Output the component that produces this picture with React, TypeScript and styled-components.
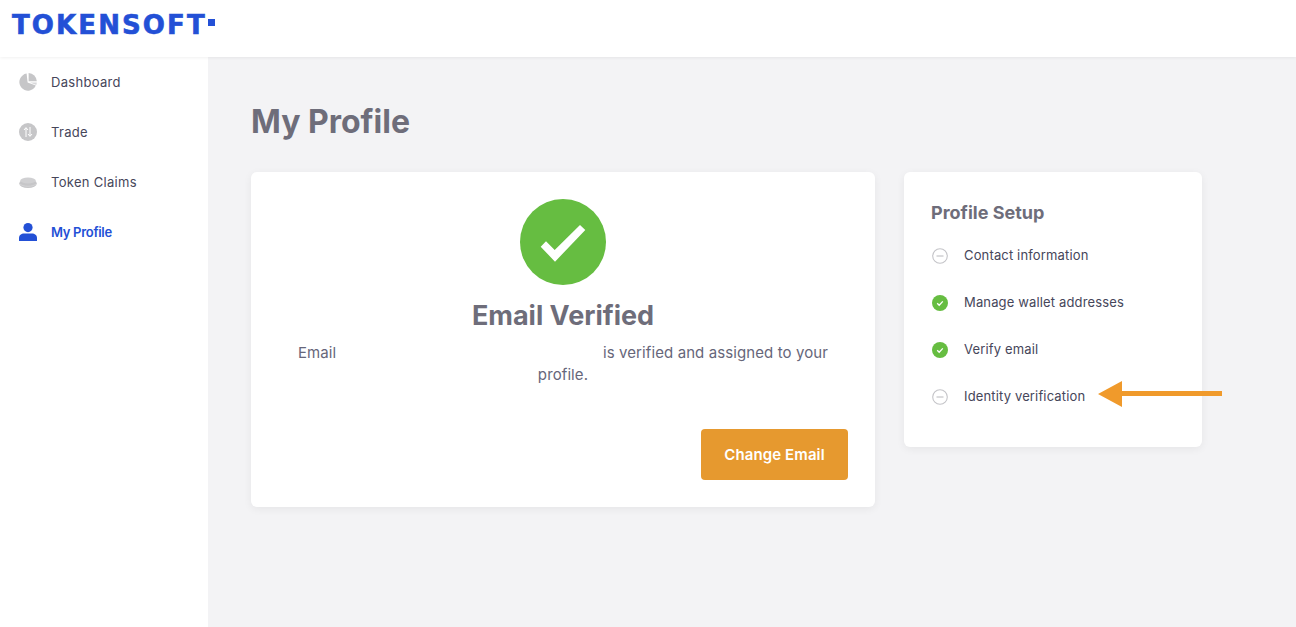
import { createGlobalStyle, styled } from "styled-components";

const GlobalStyle = createGlobalStyle`
  html, body {
    margin: 0;
    height: 100%;
    overflow: hidden;
    background: #f3f3f5;
    font-family: "Inter", "Noto Sans", sans-serif;
  }
`;

const NAV_ITEMS = [
  { label: "Dashboard", icon: <PieIcon /> },
  { label: "Trade", icon: <TradeIcon /> },
  { label: "Token Claims", icon: <CoinIcon /> },
  { label: "My Profile", icon: <UserIcon />, active: true },
];

const STEPS = [
  { label: "Contact information", done: false },
  { label: "Manage wallet addresses", done: true },
  { label: "Verify email", done: true },
  { label: "Identity verification", done: false },
];

function PieIcon() {
  return (
    <svg width="18" height="18" viewBox="0 0 18 18">
      <path d="M7.600.6A8.600 8.600 0 1 0 16.800 12.600L8.600 9.400Z" fill="#c6c6c8" />
      <path d="M9.600 0A8.600 8.600 0 0 1 17.800 8.200H9.600Z" fill="#c6c6c8" />
      <path d="M11 9.600h6.800a8 8 0 0 1-.5 2.300Z" fill="#d8d8da" />
    </svg>
  );
}

function TradeIcon() {
  return (
    <svg width="18" height="18" viewBox="0 0 18 18">
      <circle cx="9" cy="9" r="9" fill="#c6c6c8" />
      <path d="M7 14V5M5 7l2-2.400L9 7M11 4v9M9 11l2 2.400 2-2.400" fill="none" stroke="#fff" strokeWidth="1" />
    </svg>
  );
}

function CoinIcon() {
  return (
    <svg width="18" height="18" viewBox="0 0 18 18">
      <ellipse cx="9" cy="10.500" rx="8.800" ry="4.600" fill="#c6c6c8" />
      <ellipse cx="9" cy="7.500" rx="7.800" ry="3" fill="#d0d0d2" />
      <path d="M.5 10.500c1.500 2 5 2.800 8.500 2.800s7-.8 8.500-2.800" fill="none" stroke="#dcdcde" strokeWidth=".6" />
    </svg>
  );
}

function UserIcon() {
  return (
    <svg width="18" height="18" viewBox="0 0 18 18">
      <circle cx="9" cy="4.600" r="4.600" fill="#2350d6" />
      <path d="M0 18v-3c0-3 2.400-4.600 5-4.600h8c2.600 0 5 1.600 5 4.600v3Z" fill="#2350d6" />
    </svg>
  );
}

function DoneIcon() {
  return (
    <svg width="16" height="16" viewBox="0 0 16 16">
      <circle cx="8" cy="8" r="8" fill="#66bd41" />
      <path d="M5.200 8.200l2 2 3.600-3.800" fill="none" stroke="#fff" strokeWidth="1.300" />
    </svg>
  );
}

function PendingIcon() {
  return (
    <svg width="16" height="16" viewBox="0 0 16 16">
      <circle cx="8" cy="8" r="7.300" fill="none" stroke="#c4c4c8" strokeWidth="1.100" />
      <path d="M4.500 8h7" stroke="#b8b8bc" strokeWidth="1" />
    </svg>
  );
}

export default function App() {
  return (
    <Page>
      <GlobalStyle />
      <Header>
        <Logo>
          TOKENSOFT
          <LogoDot />
        </Logo>
      </Header>
      <Body>
        <Sidebar>
          {NAV_ITEMS.map((item) => (
            <NavItem key={item.label} $active={item.active}>
              <NavIcon>{item.icon}</NavIcon>
              {item.label}
            </NavItem>
          ))}
        </Sidebar>
        <Main>
          <Title>My Profile</Title>
          <Cards>
            <VerifiedCard>
              <svg width="86" height="86" viewBox="0 0 86 86">
                <circle cx="43" cy="43" r="43" fill="#66bd41" />
                <polygon points="26,42.300 20.700,47.700 35,62.700 65.300,31 60,26 34.700,51" fill="#fff" />
              </svg>
              <CardHeading>Email Verified</CardHeading>
              <Message>
                Email <HiddenAddress /> is verified and assigned to your profile.
              </Message>
              <ButtonRow>
                <ChangeButton>Change Email</ChangeButton>
              </ButtonRow>
            </VerifiedCard>
            <SetupCard>
              <SetupHeading>Profile Setup</SetupHeading>
              <StepList>
                {STEPS.map((step) => (
                  <Step key={step.label}>
                    <StepIcon>{step.done ? <DoneIcon /> : <PendingIcon />}</StepIcon>
                    {step.label}
                  </Step>
                ))}
              </StepList>
              <Arrow width="126" height="26" viewBox="0 0 126 26">
                <polygon points="0,13 24,0 24,10 124,10 124,15 24,15 24,26" fill="#f09a2b" />
              </Arrow>
            </SetupCard>
          </Cards>
        </Main>
      </Body>
    </Page>
  );
}

const Page = styled.div`
  display: flex;
  flex-direction: column;
  height: 627px;
`;

const Header = styled.header`
  height: 57px;
  flex-shrink: 0;
  display: flex;
  align-items: flex-start;
  padding-left: 12px;
  background: #fff;
  box-shadow: 0 1px 3px rgba(0, 0, 0, 0.06);
  position: relative;
`;

const Logo = styled.div`
  display: flex;
  align-items: flex-start;
  margin-top: 10px;
  font-family: "DejaVu Sans", sans-serif;
  font-weight: 700;
  font-size: 26px;
  line-height: 31px;
  letter-spacing: 2.100px;
  -webkit-text-stroke: 0.6px #2350d6;
  color: #2350d6;
`;

const LogoDot = styled.span`
  width: 7px;
  height: 7px;
  margin: 9px 0 0 1px;
  background: #2350d6;
`;

const Body = styled.div`
  flex: 1;
  display: flex;
`;

const Sidebar = styled.nav`
  width: 208px;
  background: #fff;
`;

const NavItem = styled.div<{ $active?: boolean }>`
  height: 50px;
  display: flex;
  align-items: center;
  padding-left: 19px;
  font-size: 13px;
  letter-spacing: ${(p) => (p.$active ? "-0.3px" : "0.3px")};
  font-weight: ${(p) => (p.$active ? 600 : 400)};
  color: ${(p) => (p.$active ? "#2350d6" : "#46465a")};
`;

const NavIcon = styled.span`
  width: 32px;
  height: 18px;
  flex-shrink: 0;
`;

const Main = styled.main`
  flex: 1;
  padding-left: 43px;
`;

const Title = styled.h1`
  margin: 45px 0 30px;
  font-size: 32px;
  line-height: 40px;
  font-weight: 700;
  color: #6e6d7a;
`;

const Cards = styled.div`
  display: flex;
  align-items: flex-start;
  gap: 29px;
`;

const Card = styled.section`
  box-sizing: border-box;
  background: #fff;
  border-radius: 6px;
  box-shadow: 0 2px 8px rgba(0, 0, 0, 0.06);
`;

const VerifiedCard = styled(Card)`
  width: 624px;
  height: 335px;
  padding: 27px 27px 0;
  display: flex;
  flex-direction: column;
  align-items: center;
`;

const CardHeading = styled.h2`
  margin: 12px 0 7px;
  font-size: 27px;
  line-height: 38px;
  font-weight: 700;
  color: #6e6d7a;
`;

const Message = styled.p`
  margin: 0;
  width: 540px;
  text-align: center;
  font-size: 15px;
  line-height: 22px;
  letter-spacing: 0.1px;
  color: #66667a;
`;

const HiddenAddress = styled.span`
  display: inline-block;
  width: 258px;
`;

const ButtonRow = styled.div`
  align-self: stretch;
  display: flex;
  justify-content: flex-end;
  margin-top: 43px;
`;

const ChangeButton = styled.button`
  width: 147px;
  height: 51px;
  border: none;
  border-radius: 4px;
  background: #e6992f;
  color: #fff;
  font-family: inherit;
  font-size: 15px;
  letter-spacing: 0.1px;
  font-weight: 600;
`;

const SetupCard = styled(Card)`
  width: 298px;
  height: 275px;
  padding: 29px 27px 0;
  position: relative;
`;

const SetupHeading = styled.h3`
  margin: 0 0 6px;
  font-size: 18px;
  line-height: 24px;
  font-weight: 700;
  color: #6e6d7a;
`;

const StepList = styled.div`
  display: flex;
  flex-direction: column;
`;

const Step = styled.div`
  height: 47px;
  display: flex;
  align-items: center;
  gap: 16px;
  padding-left: 1px;
  font-size: 13px;
  letter-spacing: 0.15px;
  color: #46465a;
`;

const StepIcon = styled.span`
  display: flex;
  margin-top: 2px;
`;

const Arrow = styled.svg`
  position: absolute;
  left: 194px;
  top: 209px;
`;
